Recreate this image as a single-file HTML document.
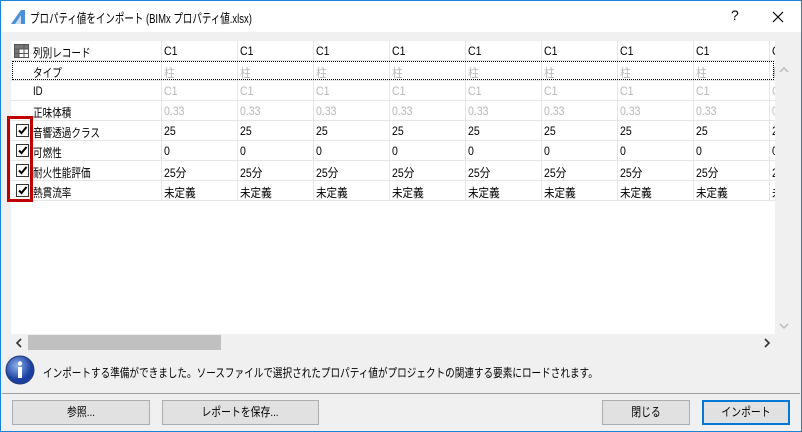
<!DOCTYPE html>
<html><head><meta charset="utf-8"><style>
*{margin:0;padding:0;box-sizing:border-box}
body{width:802px;height:432px;position:relative;overflow:hidden;background:#f0f0f0;font-family:"Liberation Sans","Noto Sans CJK JP",sans-serif;font-size:12px;color:#000}
.win{position:absolute;left:0;top:0;width:802px;height:432px;border:1px solid #1883d7}
.title{position:absolute;left:1px;top:1px;width:800px;height:31px;background:#fff}
.title span{position:absolute;left:29px;top:7px;font-size:13px}
.n{display:inline-block;transform:scaleX(.8);transform-origin:left center;white-space:nowrap}
.nc{display:inline-block;transform:scaleX(.82);transform-origin:center;white-space:nowrap}
.grid{position:absolute;left:11px;top:41px;width:764px;height:293px;background:#fff;overflow:hidden}
.row{position:absolute;left:0;height:20px;width:764px;border-bottom:1px solid #e6e6e6}
.c{position:absolute;top:3px;white-space:nowrap}
.vl{position:absolute;top:0;width:1px;height:160px;background:#e6e6e6}
.g{color:#b8b8b8}
.cb{position:absolute;left:5px;top:3px;width:13px;height:13px;border:1px solid #333;background:#fff}
.btn{position:absolute;top:400px;height:25px;background:#e1e1e1;border:1px solid #adadad;text-align:center;line-height:23px}
</style></head><body>
<div class="win"></div>
<div class="title">
<svg style="position:absolute;left:9px;top:8px" width="16" height="16"><polygon points="1,15 11,1 15,1 15,15" fill="#4a90d9"/><polygon points="5,15 11,6 11,15" fill="#cde"/></svg>
<span class="n" style="transform:scaleX(.73)">プロパティ値をインポート (BIMx プロパティ値.xlsx)</span>
<span style="left:730px;top:6px;font-size:14px">?</span>
<svg style="position:absolute;left:771px;top:10px" width="12" height="12"><path d="M1 1L11 11M11 1L1 11" stroke="#000" stroke-width="1.2"/></svg>
</div>
<div class="grid" id="g"></div>
<div style="position:absolute;left:775px;top:41px;width:16px;height:293px;background:#f0f0f0"></div>
<svg style="position:absolute;left:779px;top:66px" width="10" height="8"><path d="M1 6L5 2L9 6" stroke="#bbb" fill="none" stroke-width="1.5"/></svg>
<svg style="position:absolute;left:779px;top:322px" width="10" height="8"><path d="M1 2L5 6L9 2" stroke="#bbb" fill="none" stroke-width="1.5"/></svg>
<div style="position:absolute;left:28px;top:335px;width:193px;height:15px;background:#c0c0c0"></div>
<svg style="position:absolute;left:15px;top:338px" width="8" height="10"><path d="M6 1L2 5L6 9" stroke="#333" fill="none" stroke-width="1.6"/></svg>
<svg style="position:absolute;left:763px;top:338px" width="8" height="10"><path d="M2 1L6 5L2 9" stroke="#333" fill="none" stroke-width="1.6"/></svg>
<svg style="position:absolute;left:5px;top:355px" width="30" height="30"><defs><radialGradient id="r" cx="40%" cy="35%"><stop offset="0" stop-color="#8fb3ef"/><stop offset="1" stop-color="#1a3fa0"/></radialGradient></defs><circle cx="15" cy="15" r="14" fill="url(#r)" stroke="#233a7a"/><circle cx="15" cy="8.5" r="2.2" fill="#fff"/><rect x="13" y="12" width="4" height="11" fill="#fff"/></svg>
<div class="n" style="position:absolute;left:43px;top:364px">インポートする準備ができました。ソースファイルで選択されたプロパティ値がプロジェクトの関連する要素にロードされます。</div>
<div style="position:absolute;left:2px;top:393px;width:798px;height:1px;background:#a0a0a0"></div>
<div class="btn" style="left:12px;width:138px"><span class="nc">参照...</span></div>
<div class="btn" style="left:162px;width:157px"><span class="nc">レポートを保存...</span></div>
<div class="btn" style="left:602px;width:88px"><span class="nc">閉じる</span></div>
<div class="btn" style="left:702px;width:88px;border:2px solid #0078d7;line-height:21px"><span class="nc">インポート</span></div>
<div style="position:absolute;left:7px;top:116px;width:26px;height:86px;border:3px solid #c00000"></div>
<script>
var g=document.getElementById('g');
var labels=['列別レコード','タイプ','ID','正味体積','音響透過クラス','可燃性','耐火性能評価','熱貫流率'];
var vals=['C1','柱','C1','0.33','25','0','25分','未定義'];
var h='';
for(var i=0;i<8;i++){
 var gr=(i>=1&&i<=3)?' g':'';
 h+='<div class="row" style="top:'+(i*20)+'px">';
 if(i>=4)h+='<div class="cb"><svg width="11" height="11" style="position:absolute;left:0;top:0"><path d="M2 5.5L4.5 8L9.5 2" stroke="#000" stroke-width="2" fill="none"/></svg></div>';
 h+='<div class="c" style="left:22px"><span class="n">'+labels[i]+'</span></div>';
 for(var j=0;j<9;j++)h+='<div class="c'+gr+'" style="left:'+(153+j*76)+'px"><span class="n" style="transform:scaleX(.88)">'+vals[i]+'</span></div>';
 h+='</div>';
}
for(var j=0;j<9;j++)h+='<div class="vl" style="left:'+(150+j*76)+'px"></div>';
h+='<div style="position:absolute;left:1px;top:20px;width:762px;height:19px;border:1px dotted #000"></div>';
h+='<svg style="position:absolute;left:3px;top:3px" width="15" height="14"><rect x="0.5" y="0.5" width="14" height="13" fill="#fff" stroke="#555"/><rect x="1" y="1" width="4" height="12" fill="#777"/><rect x="1" y="1" width="13" height="4" fill="#777"/><path d="M5 5V14M10 1V14M1 5H14M1 9.5H14" stroke="#555"/></svg>';
g.innerHTML=h;
</script>
</body></html>
